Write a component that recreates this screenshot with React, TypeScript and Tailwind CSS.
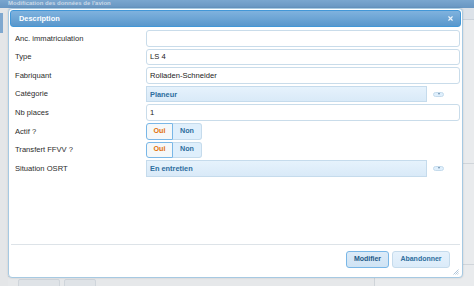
import { X } from 'lucide-react'

const font = { fontFamily: '"Liberation Sans", Arial, sans-serif' }

function TextRow({ label, value }: { label: string; value?: string }) {
  return (
    <div className="flex items-center h-[16.6px]">
      <div className="w-[131px] text-[7.6px] text-[#2b2b2b]">{label}</div>
      <div className="flex-1 h-full border border-[#c9dcea] rounded-[3px] bg-white flex items-center px-[3px] text-[7.6px] text-[#222]">
        {value}
      </div>
    </div>
  )
}

function SelectRow({ label, value }: { label: string; value: string }) {
  return (
    <div className="flex items-center h-[16.6px]">
      <div className="w-[131px] text-[7.6px] text-[#2b2b2b]">{label}</div>
      <div className="w-[281px] h-full border border-[#c5dbec] bg-gradient-to-b from-[#e6f2fc] to-[#d9eaf8] flex items-center px-[3px] text-[7.4px] font-bold text-[#2e6e9e]">
        {value}
      </div>
      <div className="ml-[6px] w-[11px] h-[5px] rounded-full bg-[#dfeffc] border border-[#c5dbec] flex items-center justify-center">
        <div className="w-0 h-0 border-l-[1.5px] border-r-[1.5px] border-t-[2px] border-l-transparent border-r-transparent border-t-[#6a8aa8]" />
      </div>
    </div>
  )
}

function ToggleRow({ label }: { label: string }) {
  return (
    <div className="flex items-center h-[16.6px]">
      <div className="w-[131px] text-[7.6px] text-[#2b2b2b]">{label}</div>
      <div className="flex h-full text-[7.2px] font-bold">
        <div className="w-[27px] flex items-center justify-center border border-[#79b7e7] bg-[#f5f8f9] text-[#e17009] rounded-l-[3px]">
          Oui
        </div>
        <div className="w-[29px] flex items-center justify-center border border-l-0 border-[#c5dbec] bg-[#dfeffc] text-[#2e6e9e] rounded-r-[3px]">
          Non
        </div>
      </div>
    </div>
  )
}

export default function App() {
  return (
    <div className="relative w-[474px] h-[286px] overflow-hidden bg-[#e6e8ea]" style={font}>
      {/* page behind the dialog */}
      <div className="h-[8px] bg-gradient-to-b from-[#7aa6cf] to-[#6896c2] pl-[8px] text-[6px] text-[#c9d9e8] leading-[6px] font-bold">
        Modification des données de l'avion
      </div>
      <div className="flex h-[278px]">
        <div className="w-[8px] bg-[#e4e6e8] flex flex-col">
          <div className="mt-[5px] h-[20px] w-[3px] bg-[#7fa8cf]" />
        </div>
        <div className="flex-1 flex flex-col">
          <div className="h-[12px] bg-[#dde3ea] border-b border-[#c9d3dd]" />
          <div className="flex-1 bg-[#eef0f2]" />
          <div className="h-[10px] flex items-start gap-[4px] pl-[10px] pt-[2px] border-t border-[#d4d8dc]">
            <div className="w-[42px] h-[8px] rounded-t-[2px] bg-[#dfe3e7] border border-[#cfd5db]" />
            <div className="w-[32px] h-[8px] rounded-t-[2px] bg-[#dfe3e7] border border-[#cfd5db]" />
          </div>
        </div>
        <div className="w-[100px] bg-[#e9ebed] border-l border-[#cfd4d9] flex flex-col">
          <div className="h-[12px] bg-[#dce2e9] border-b border-[#c9d1da]" />
          <div className="mt-[143px] border-t border-[#d0d5da]" />
          <div className="mt-[100px] border-t border-[#d0d5da]" />
          <div className="pl-[20px] text-[6px] text-[#666] leading-[7px]">• ...</div>
        </div>
      </div>

      {/* dialog */}
      <div className="absolute left-[8px] top-[8px] w-[455px] h-[270px] bg-white border border-[#a6c9e2] rounded-[4px] p-[1px] flex flex-col shadow-[0_0_2px_rgba(0,0,0,0.15)]">
        <div className="h-[17px] rounded-[3px] border border-[#4297d7] bg-gradient-to-b from-[#7fb2de] to-[#5a98cc] flex items-center justify-between pl-[8px] pr-[6px] text-white">
          <span className="text-[7.4px] font-bold">Description</span>
          <X className="w-[7px] h-[7px] text-[#eef4fa]" strokeWidth={4} />
        </div>

        <div className="flex-1 flex flex-col gap-[2px] pt-[3px] pl-[5px] pr-[1px]">
          <TextRow label="Anc. immatriculation" />
          <TextRow label="Type" value="LS 4" />
          <TextRow label="Fabriquant" value="Rolladen-Schneider" />
          <SelectRow label="Catégorie" value="Planeur" />
          <TextRow label="Nb places" value="1" />
          <ToggleRow label="Actif ?" />
          <ToggleRow label="Transfert FFVV ?" />
          <SelectRow label="Situation OSRT" value="En entretien" />
        </div>

        <div className="relative h-[32px] mx-[1px] border-t border-[#dde3e8] flex items-start justify-end gap-[3px] pt-[6px] pr-[10px]">
          <button className="w-[43px] h-[17px] rounded-[3px] border border-[#79b7e7] bg-gradient-to-b from-[#dcebf8] to-[#cfe3f4] text-[7px] font-bold text-[#1d5987]">
            Modifier
          </button>
          <button className="w-[58px] h-[17px] rounded-[3px] border border-[#c5dbec] bg-gradient-to-b from-[#e6f2fc] to-[#dbebf9] text-[7px] font-bold text-[#2e6e9e]">
            Abandonner
          </button>
          <svg className="absolute right-[1px] bottom-[1px]" width="6" height="6" viewBox="0 0 6 6">
            <path d="M5.5 0.5 L0.5 5.5 M5.5 2.5 L2.5 5.5 M5.5 4.5 L4.5 5.5" stroke="#9db8cf" strokeWidth="0.8" />
          </svg>
        </div>
      </div>
    </div>
  )
}
